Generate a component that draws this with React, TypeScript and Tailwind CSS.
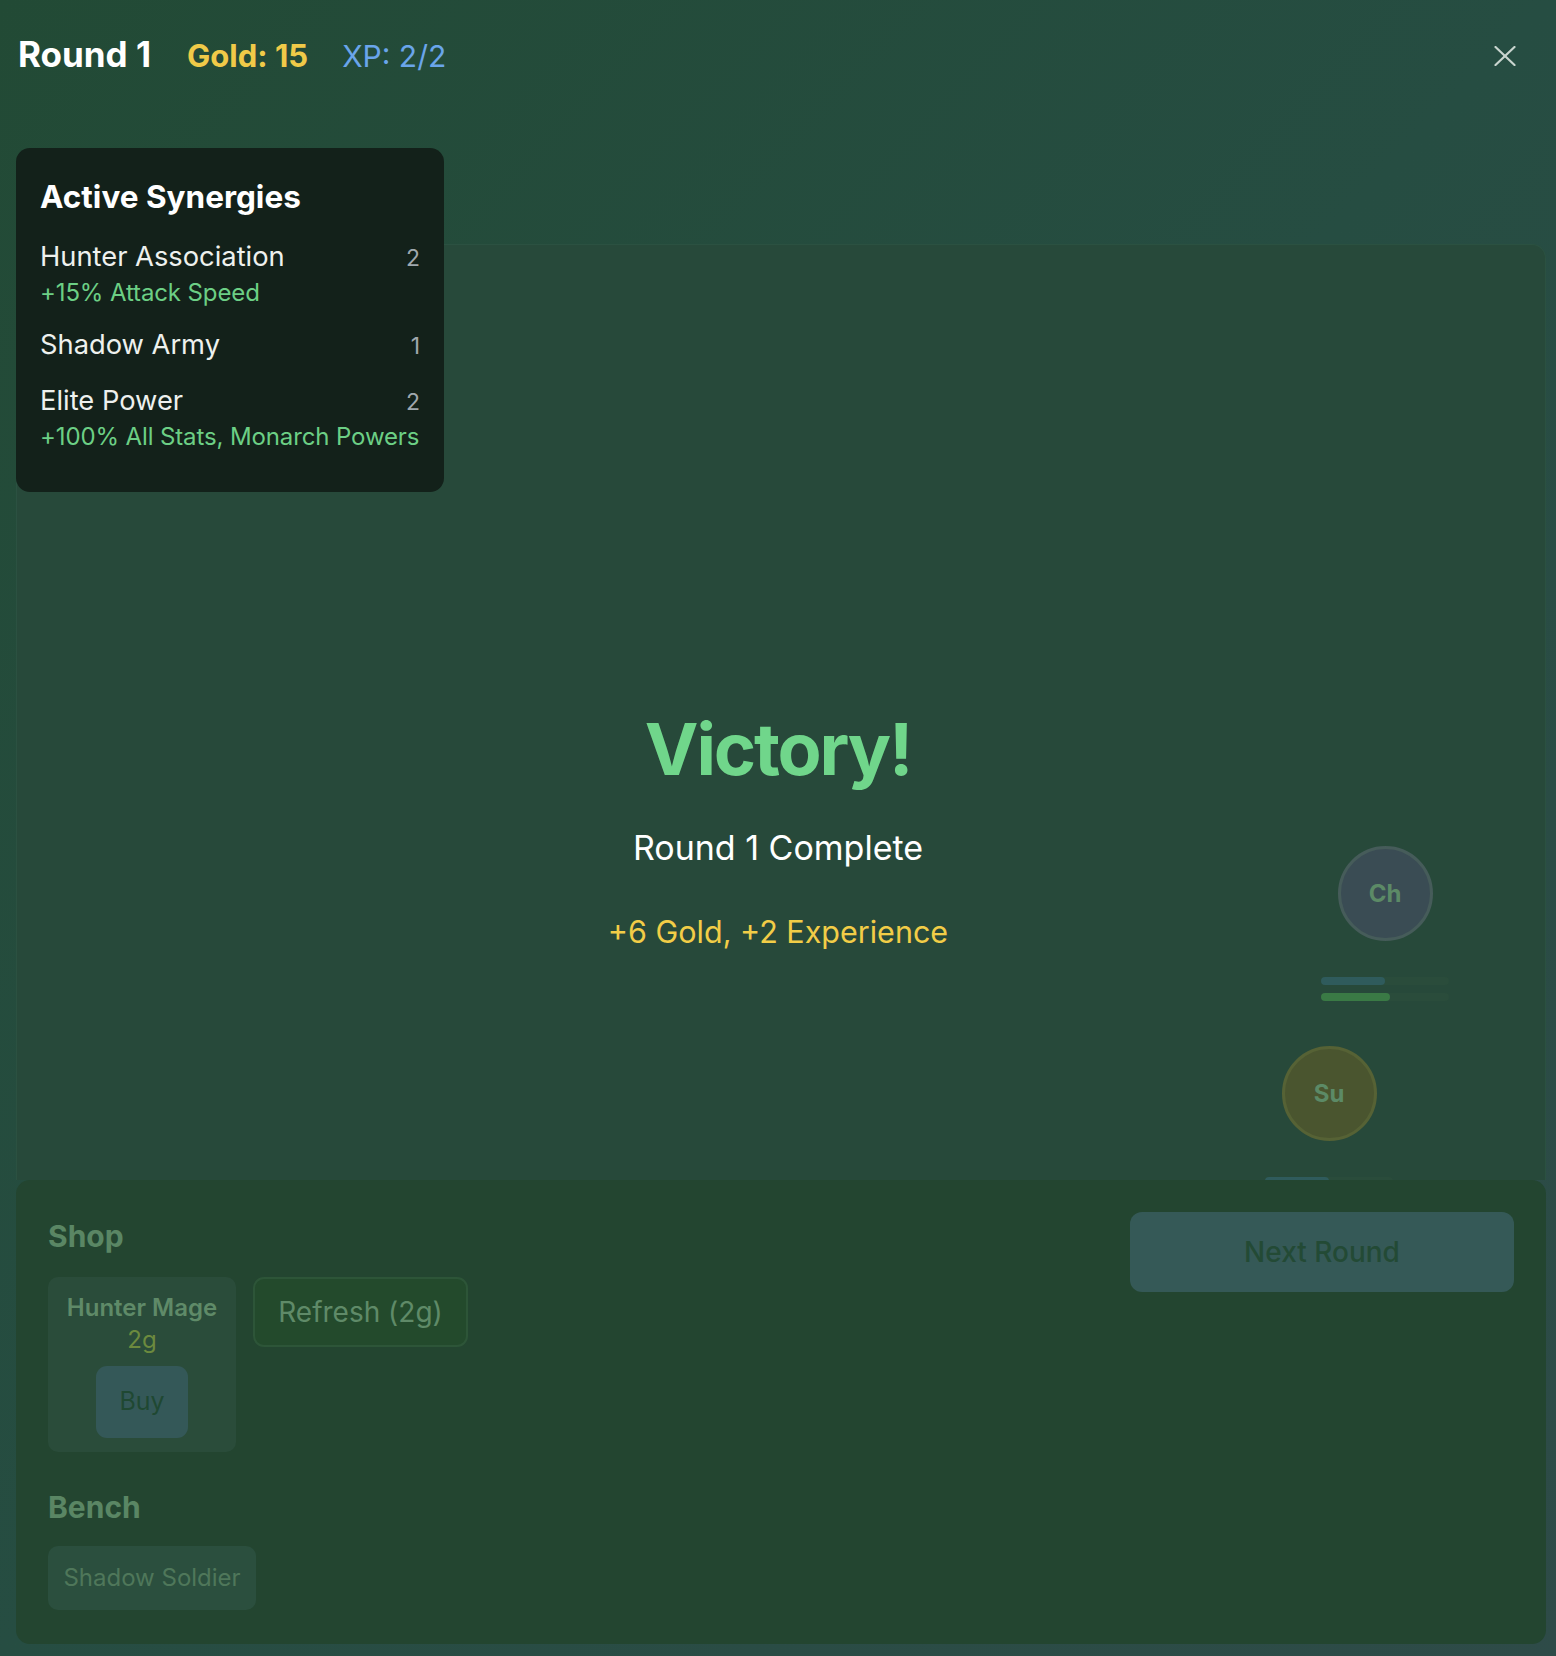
import React from 'react';

type Synergy = { name: string; count: number; bonus?: string };

const synergies: Synergy[] = [
  { name: 'Hunter Association', count: 2, bonus: '+15% Attack Speed' },
  { name: 'Shadow Army', count: 1 },
  { name: 'Elite Power', count: 2, bonus: '+100% All Stats, Monarch Powers' },
];

type Unit = { label: string; left: number; top: number; circle: string; hp: number; mana: number };

const units: Unit[] = [
  { label: 'Ch', left: 1304, top: 601, circle: 'bg-[#3a4c54] border-[#465c5a]', hp: 50, mana: 54 },
  { label: 'Su', left: 1248, top: 801, circle: 'bg-[#4a552f] border-[#566235]', hp: 50, mana: 54 },
];

const UnitToken: React.FC<{ unit: Unit }> = ({ unit }) => (
  <div className="absolute flex w-[128px] flex-col items-center gap-[36px]" style={{ left: unit.left, top: unit.top }}>
    <div className={`flex h-[95px] w-[95px] items-center justify-center rounded-full border-[3px] ${unit.circle}`}>
      <span className="text-[24px] font-bold text-[#5c8a66]">{unit.label}</span>
    </div>
    <div className="flex w-full flex-col gap-[8px]">
      <div className="h-[8px] w-full rounded-full bg-[#2a4c3b]">
        <div className="h-full rounded-full bg-[#2f5b5c]" style={{ width: `${unit.hp}%` }} />
      </div>
      <div className="h-[8px] w-full rounded-full bg-[#2a4c3b]">
        <div className="h-full rounded-full bg-[#3a7a45]" style={{ width: `${unit.mana}%` }} />
      </div>
    </div>
  </div>
);

const App: React.FC = () => {
  return (
    <div className="relative flex h-[1656px] w-full flex-col overflow-hidden bg-gradient-to-br from-[#224a35] via-[#264d42] to-[#2e4b48] font-['Inter','Liberation_Sans',sans-serif]">
      {/* header */}
      <header className="flex h-[112px] shrink-0 items-center justify-between pl-[18px] pr-[36px]">
        <div className="flex items-baseline">
          <h1 className="text-[35px] leading-[40px] font-bold text-white">Round 1</h1>
          <span className="ml-[36px] text-[31px] font-bold text-[#f0ca48]">Gold: 15</span>
          <span className="ml-[34px] text-[30px] text-[#6aa5ea]">XP: 2/2</span>
        </div>
        <button className="flex h-[30px] w-[30px] items-center justify-center">
          <svg width="22" height="20" viewBox="0 0 22 20" fill="none" stroke="#c9d5cf" strokeWidth="2.2" strokeLinecap="round">
            <line x1="1.5" y1="1" x2="20.5" y2="19" />
            <line x1="20.5" y1="1" x2="1.5" y2="19" />
          </svg>
        </button>
      </header>

      {/* board */}
      <main className="flex flex-1 flex-col pb-[12px] pl-[16px] pr-[10px] pt-[132px]">
        <div className="relative h-[936px] shrink-0 overflow-hidden rounded-t-[14px] border border-b-0 border-[#2b5141] bg-[#27493a]">
          {units.map(u => (
            <UnitToken key={u.label} unit={u} />
          ))}
        </div>

        {/* shop */}
        <section className="relative z-10 flex flex-1 justify-between rounded-[14px] bg-[#234530] p-[32px]">
          <div className="flex flex-col">
            <h2 className="mt-[4px] text-[30px] leading-[40px] font-bold text-[#5a8664]">Shop</h2>
            <div className="mt-[21px] flex items-start gap-[17px]">
              <div className="flex h-[175px] w-[188px] flex-col items-center rounded-[10px] bg-[#2a4c3a] pt-[16px]">
                <span className="text-[24px] leading-[30px] font-semibold text-[#5f8a68]">Hunter Mage</span>
                <span className="mt-[2px] text-[24px] leading-[30px] text-[#6c8a3e]">2g</span>
                <button className="mt-[11px] flex h-[72px] w-[92px] items-center justify-center rounded-[11px] bg-[#345858] text-[25px] text-[#1f4832]">
                  Buy
                </button>
              </div>
              <button className="flex h-[70px] w-[215px] items-center justify-center rounded-[11px] border-2 border-[#2d5538] bg-[#234a2c] text-[28px] text-[#5f8a68]">
                Refresh (2g)
              </button>
            </div>
            <h2 className="mt-[35px] text-[30px] leading-[40px] font-bold text-[#5a8664]">Bench</h2>
            <div className="mt-[19px] flex">
              <div className="flex h-[64px] w-[208px] items-center justify-center rounded-[10px] bg-[#2b4f3e] text-[24px] text-[#4f775a]">
                Shadow Soldier
              </div>
            </div>
          </div>
          <button className="flex h-[80px] w-[384px] items-center justify-center rounded-[12px] bg-[#355957] text-[28px] font-medium text-[#234a35]">
            Next Round
          </button>
        </section>
      </main>

      {/* synergies */}
      <aside className="absolute left-[16px] top-[148px] z-20 w-[428px] rounded-[14px] bg-[#13211a] px-[24px] pb-[39px] pt-[28px]">
        <h3 className="text-[31.5px] leading-[42px] font-bold text-white">Active Synergies</h3>
        <div className="mt-[19px] flex flex-col gap-[16px]">
          {synergies.map(s => (
            <div key={s.name} className="flex flex-col">
              <div className="flex items-baseline justify-between">
                <span className="text-[27.3px] leading-[40px] text-[#eef1ee]">{s.name}</span>
                <span className="text-[23px] text-[#a0a8ae]">{s.count}</span>
              </div>
              {s.bonus && (
                <span className="whitespace-nowrap text-[24px] leading-[32px] tracking-[-0.005em] text-[#6ccf85]">{s.bonus}</span>
              )}
            </div>
          ))}
        </div>
      </aside>

      {/* victory overlay */}
      <div className="absolute left-0 right-0 top-[709px] z-20 flex flex-col items-center">
        <div className="text-[72px] leading-[80px] font-bold tracking-[-0.03em] text-[#70d68b]">Victory!</div>
        <div className="mt-[37px] text-[34px] leading-[44px] text-white">Round 1 Complete</div>
        <div className="mt-[42px] text-[30.5px] leading-[40px] text-[#f2cd47]">+6 Gold, +2 Experience</div>
      </div>
    </div>
  );
};

export default App;
